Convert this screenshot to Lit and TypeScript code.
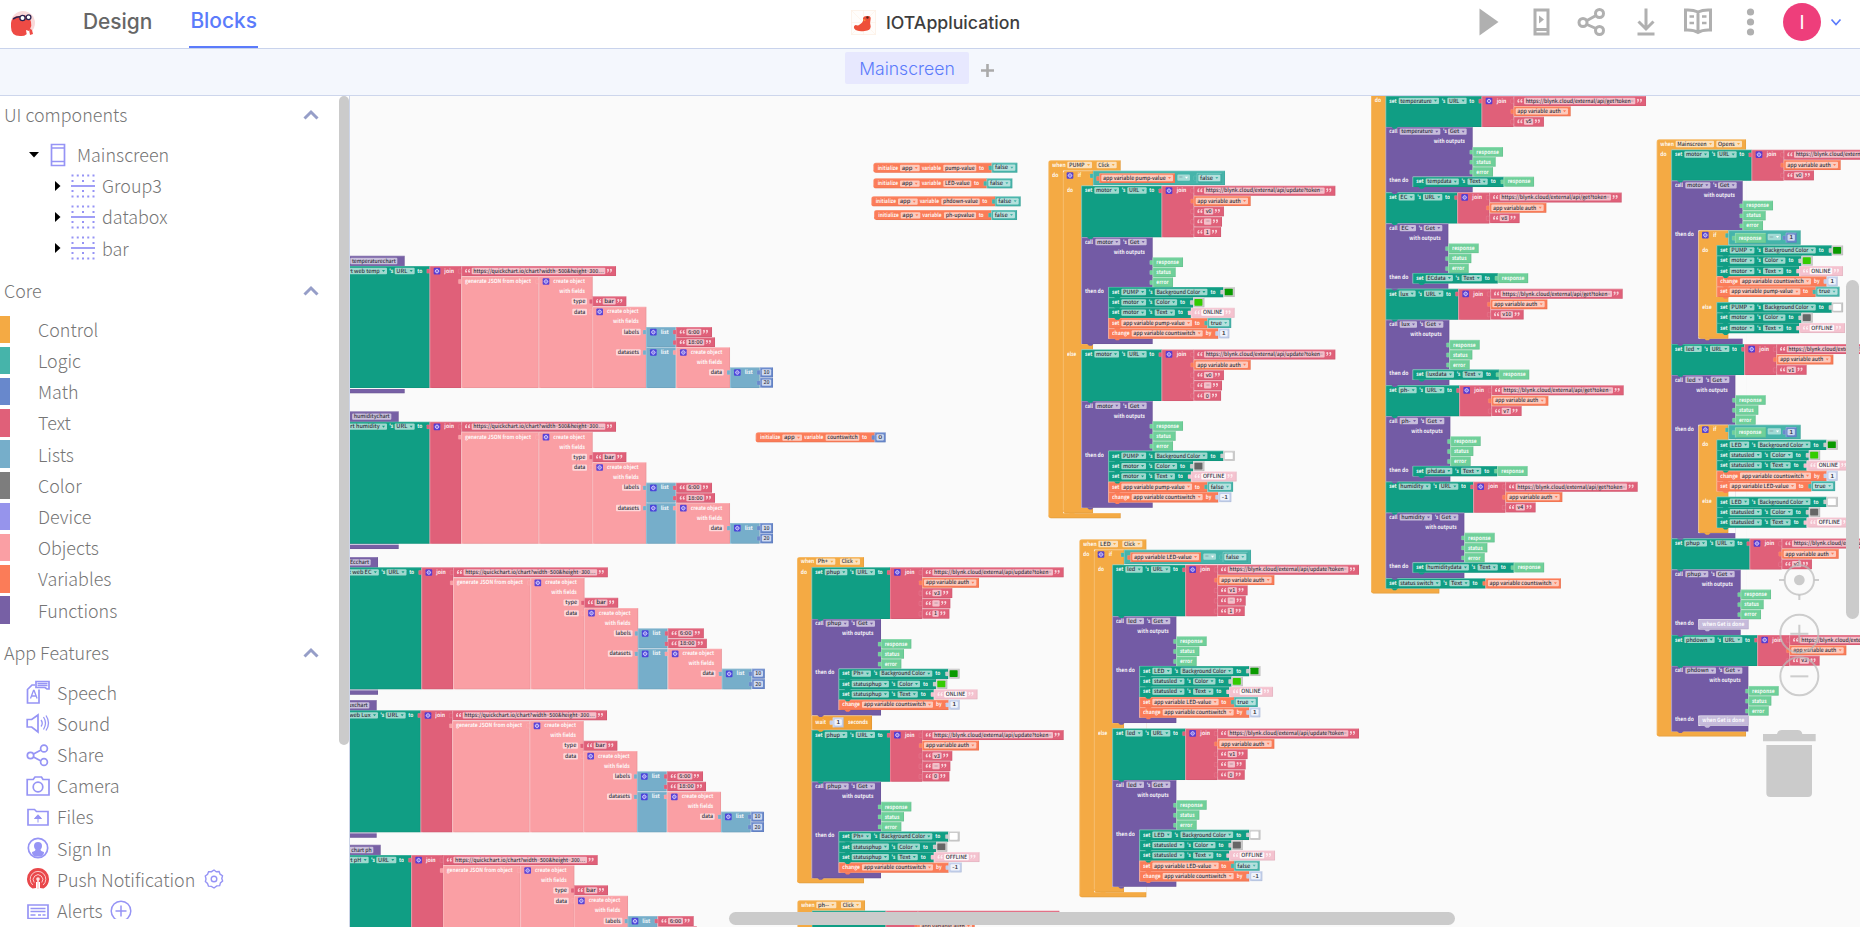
import { LitElement, html, svg, css } from "lit";
import { customElement } from "lit/decorators.js";

const C = {
  control: "#f4aa44", logic: "#46b4aa", math: "#6888cc", text: "#e06079", list: "#76aeca",
  color: "#7d7d7d", device: "#9694ec", object: "#fa9fa4", variable: "#fb7c58", fn: "#7760a5",
  set: "#109e84", call: "#735ba5", out: "#6fd09a", pale: "#f4c2cf", paleNum: "#c2cfec", swatch: "#cacaca",
};

/* Workspace blocks are drawn in thirds of a pixel. */
const EM = 17.6;
const charW = (c: string) =>
  "ijl.:',/|!".includes(c) ? 0.28 : c === "t" ? 0.33 : "fr".includes(c) ? 0.36 : c === "w" ? 0.76 : "mM".includes(c) ? 0.83 :
  c === " " ? 0.2 : c === "-" ? 0.32 : c === "s" ? 0.43 : c === "c" ? 0.46 : c === "L" || c === "F" ? 0.53 : /[A-Z]/.test(c) ? 0.6 :
  "aezv".includes(c) ? 0.49 : /[0-9]/.test(c) ? 0.52 : 0.55;
const est = (s: string) => s === "Background Color" ? 132 : [...s].reduce((n, c) => n + charW(c), 0) * EM;

const T = (x: number, cy: number, s: string, w = est(s), dark = false) => svg`<text
  x=${x} y=${cy + 5.5} textLength=${w} lengthAdjust="spacingAndGlyphs" class=${dark ? "d" : "l"}>${
  s.split(/(=)/).map((p) => (p === "=" ? svg`<tspan opacity=".25">=</tspan>` : p))}</text>`;

const F = (x: number, cy: number, s: string, w: number, arrow = "", op = 0.6) => svg`
  <rect x=${x} y=${cy - 9.5} width=${w} height="19" rx="3" fill="#fff" opacity=${op}></rect>
  ${T(x + 5, cy, s, arrow ? w - 27 : w - 10, true)}
  ${arrow ? svg`<path d="M${x + w - 15} ${cy - 3}h9l-4.5 6z" fill=${arrow}></path>` : ""}`;

const B = (x: number, y: number, r: number, b: number, color: string, tab = false, round = false) => svg`
  ${tab ? svg`<rect x=${x - 9} y=${y + 9} width="10" height="13" rx="2" fill=${color} stroke="#fff" stroke-opacity=".3"></rect>` : ""}
  <path d=${round ? `M${x + 8} ${y}H${r}V${b}H${x + 8}q-8 0-8-8V${y + 8}q0-8 8-8z` : `M${x} ${y}H${r}V${b}H${x}z`} fill=${color}></path>
  <path d=${`M${x + 1} ${b - (round ? 8 : 0)}V${y + 1}H${r - 1}`} fill="none" stroke="#fff" stroke-opacity=".35" stroke-width="2"></path>
  <path d=${`M${r - 1} ${y + 1}V${b - 1}H${x + 6}`} fill="none" stroke="#000" stroke-opacity=".09" stroke-width="2"></path>`;

const notch = (x: number, y: number, color: string) =>
  svg`<path d=${`M${x + 17} ${y - 1}h20l-6 6h-8z`} fill=${color}></path>`;

const gear = (x: number, cy: number) => svg`
  <rect x=${x} y=${cy - 9.5} width="20" height="20" rx="3" fill="#4637dc" opacity=".88"></rect>
  <circle cx=${x + 10} cy=${cy + 0.5} r="5" fill="none" stroke="#dcd8ff" stroke-width="2.6"></circle>
  <path d=${`M${x + 10} ${cy - 7}v15M${x + 2.5} ${cy + 0.5}h15`} stroke="#dcd8ff" stroke-width="1.6" opacity=".6"></path>`;

const quote = (x: number, cy: number, flip = false) => svg`<path transform=${`translate(${x} ${cy - 7})${flip ? " rotate(180 8 6)" : ""}`}
  d="M6 0C2 1 0 4 0 8q0 4 3 4t3.500-3q0-3-3-3.500Q4 3 6.500 2zM15 0c-4 1-6 4-6 8q0 4 3 4t3.500-3q0-3-3-3.500Q13 3 15.500 2z" fill="#fff" opacity=".72"></path>`;

const str = (x: number, y: number, s: string, h = 30, tw = est(s), color = C.text) => {
  const fw = s === "" ? 22 : tw + 10;
  return svg`${B(x, y, x + fw + 63, y + h, color, true)}${quote(x + 11, y + 15)}
    ${F(x + 31, y + 15, s || "=", fw, "", color === C.pale ? 0.85 : 0.6)}${quote(x + fw + 35, y + 15, true)}`;
};
const num = (x: number, y: number, s: string, color = C.paleNum) => {
  const fw = s === "1" || s === "0" ? 22 : 28;
  return svg`${B(x, y, x + fw + 11, y + 30, color, true)}${F(x + 5.5, y + 15, s, fw, "", color === C.math ? 0.68 : 0.75)}`;
};
const bool = (x: number, y: number, s: string) => {
  const w = est(s) + 30;
  return svg`${B(x, y, x + w + 11, y + 30, C.logic, true)}${F(x + 5, y + 15, s, w, C.logic)}`;
};
const swatch = (x: number, y: number, fill: string) => svg`${B(x, y, x + 34, y + 30, C.swatch, true)}
  <rect x=${x + 4} y=${y + 5} width="24" height="20" rx="2" fill=${fill}></rect>`;

type Part = { h: number; color: string; draw: (x: number, y: number) => unknown };
type Val = (x: number, y: number) => unknown;

const stack = (x: number, y: number, parts: Part[]) => {
  let at = y;
  return parts.map((p, i) => {
    const top = at;
    at += p.h;
    return [p.draw(x, top), i ? notch(x, top, parts[i - 1].color) : "", i === parts.length - 1 ? notch(x, at, p.color) : ""];
  });
};
const total = (parts: Part[]) => parts.reduce((n, p) => n + p.h, 0);

const url = (name: string, off: number, action: string, ...args: string[]): Part => {
  const h = 31 * (args.length + 2);
  return {
    h, color: C.set,
    draw: (x, y) => {
      const j = x + off, c = y + 14.5, s = j + 96;
      const link = `https://blynk.cloud/external/api/${action}?token=`;
      return svg`${B(x, y, j, y + h, C.set)}${T(x + 11, c, "set", 22)}${F(x + 39, c, name, off - 167, C.set)}
        ${T(j - 120, c, "'s", 11)}${F(j - 103, c, "URL", 58, C.set)}${T(j - 37, c, "to", 15)}
        ${B(j, y, s, y + h, C.text, true)}${gear(j + 12, c)}${T(j + 45, c, "join", 29)}
        ${str(s, y, link, 30, action === "get" ? 324 : 352)}
        ${B(s, y + 31, s + 171, y + 61, C.variable, true)}${F(s + 6, y + 46, "app variable auth", 157, C.variable)}
        ${args.map((a, i) => str(s, y + 62 + i * 31, a))}`;
    },
  };
};

const call = (name: string, off: number, inner: Part[]): Part => {
  const h = 149 + total(inner) + 16.3;
  return {
    h, color: C.call,
    draw: (x, y) => {
      const r = x + off - 27;
      return svg`${B(x, y, r, y + h, C.call)}${T(x + 11, y + 14, "call", 24)}${F(x + 42, y + 14, name, off - 166, C.call)}
        ${T(r - 89, y + 14, "'s", 11)}${F(r - 74, y + 14, "Get", 56, C.call)}${T(r - 117, y + 44, "with outputs", 94)}
        ${[["response", 91, 68], ["status", 69, 44], ["error", 61, 37]].map(([s, w, t], i) => svg`
          ${B(r, y + 60 + i * 30, r + Number(w), y + 89 + i * 30, C.out, true)}${T(r + 11, y + 75 + i * 30, String(s), Number(t))}`)}
        ${T(x + 11, y + 161, "then do", 57)}
        <rect x=${x + 81} y=${y + 149} width=${r - x - 80} height=${total(inner)} fill="#fafafa"></rect>
        ${stack(x + 81, y + 149, inner)}`;
    },
  };
};

const prop = (name: string, p: string, val: Val): Part => ({
  h: 31, color: C.set,
  draw: (x, y) => {
    const c = y + 15, w = est(name) + 28, px = x + 39 + w + 26, pw = est(p) + 26, e = px + pw + 48;
    return svg`${B(x, y, e, y + 31, C.set)}${T(x + 11, c, "set", 22)}${F(x + 39, c, name, w, C.set)}
      ${T(px - 18, c, "'s", 11)}${F(px, c, p, pw, C.set)}${T(px + pw + 9, c, "to", 15)}${val(e, y)}`;
  },
});
const setVar = (name: string, val: Val): Part => ({
  h: 31, color: C.variable,
  draw: (x, y) => {
    const c = y + 15, w = est(name) + 27, e = x + 39 + w + 46;
    return svg`${B(x, y, e, y + 31, C.variable)}${T(x + 11, c, "set", 22)}${F(x + 39, c, name, w, C.variable)}
      ${T(x + 39 + w + 8, c, "to", 15)}${val(e, y)}`;
  },
});
const change = (n: string): Part => ({
  h: 31, color: C.variable,
  draw: (x, y) => svg`${B(x, y, x + 330, y + 31, C.variable)}${T(x + 11, y + 15, "change", 53)}
    ${F(x + 70, y + 15, "app variable countswitch", 213, C.variable)}${T(x + 292, y + 15, "by", 17)}${num(x + 330, y, n)}`,
});
const wait: Part = {
  h: 44, color: "#f2a136",
  draw: (x, y) => svg`${B(x, y, x + 181, y + 43, "#f2a136")}${T(x + 11, y + 21, "wait", 32)}${num(x + 63, y + 6, "1")}${T(x + 109, y + 21, "seconds", 60)}`,
};
const filler: Part = {
  h: 31, color: "#c6bbdb",
  draw: (x, y) => svg`${B(x, y, x + 151, y + 30, "#c6bbdb", false, true)}${T(x + 12, y + 15, "when Get is done", 126)}`,
};
const iff = (condRight: number, cond: Val, a: Part[], b: Part[]): Part => {
  const ha = total(a), h = 45 + ha + 16 + total(b) + 16;
  return {
    h, color: C.control,
    draw: (x, y) => svg`${B(x, y, x + 90, y + h, C.control, false, true)}
      <rect x=${x + 55} y=${y + 45} width="36" height=${ha} fill="#fafafa"></rect>
      <rect x=${x + 55} y=${y + 61 + ha} width="36" height=${total(b)} fill="#fafafa"></rect>
      ${gear(x + 11, y + 14)}${T(x + 44, y + 14, "if", 10)}
      ${B(x + 90, y, x + condRight, y + 43, C.logic, true)}${cond(x + 90, y)}
      ${T(x + 12, y + 59, "do", 18)}${stack(x + 55, y + 45, a)}
      ${T(x + 12, y + 75 + ha, "else", 28)}${stack(x + 55, y + 61 + ha, b)}`,
  };
};
const varCond = (name: string, w: number): Val => (x, y) => svg`
  ${B(x + 19, y + 8, x + w, y + 37, C.variable, true)}${F(x + 25, y + 22, name, w - 31, C.variable)}
  ${F(x + w + 7, y + 21, "=", 38, "#fff", 0.5)}
  ${B(x + w + 65, y + 7, x + w + 141, y + 37, C.logic, true)}${F(x + w + 70, y + 22, "false", 66, C.logic)}`;
const respCond: Val = (x, y) => svg`
  ${B(x + 20, y + 8, x + 113, y + 38, C.out, true)}${T(x + 31, y + 23, "response", 68)}
  ${F(x + 118, y + 20, "=", 40, "#fff", 0.5)}${num(x + 172, y + 7, "1", C.math)}`;

const event = (x: number, y: number, r: number, name: string, ev: string, nw: number, ew: number, body: Part[]) => {
  const h = total(body);
  return svg`${B(x, y, r, y + 31 + h + 15, C.control, false, true)}
    <rect x=${x + 44} y=${y + 31} width=${r - x - 43} height=${h} fill="#fafafa"></rect>
    ${T(x + 11, y + 14, "when", 41)}${F(x + 57, y + 14, name, nw, C.control, 0.65)}
    ${F(r - 12 - ew, y + 14, ev, ew, C.control, 0.65)}${T(x + 11, y + 45, "do", 19)}
    ${stack(x + 44, y + 31, body)}`;
};

const sw = (c: string): Val => (x, y) => swatch(x, y, c);
const pale = (s: string): Val => (x, y) => str(x, y, s, 30, s === "ONLINE" ? 58 : 64, C.pale);
const bl = (s: string): Val => (x, y) => bool(x, y, s);
const resp: Val = (x, y) => svg`${B(x, y, x + 91, y + 30, C.out, true)}${T(x + 12, y + 15, "response", 68)}`;

const on = (a: string, b: string) => [prop(a, "Background Color", sw("#0a9a00")), prop(b, "Color", sw("#33cc00")), prop(b, "Text", pale("ONLINE"))];
const off = (a: string, b: string) => [prop(a, "Background Color", sw("#fff")), prop(b, "Color", sw("#666")), prop(b, "Text", pale("OFFLINE"))];

const toggle = (dev: string, o: number, btn: string, lbl: string, v: string, variable: string, cr: number, vw: number) =>
  iff(cr, varCond(variable, vw),
    [url(dev, o, "update", v, "", "1"), call(dev, o, [...on(btn, lbl), setVar(variable, bl("true")), change("1")])],
    [url(dev, o, "update", v, "", "0"), call(dev, o, [...off(btn, lbl), setVar(variable, bl("false")), change("-1")])]);

const sensor = (dev: string, o: number, v: string, target: string) =>
  [url(dev, o, "get", v), call(dev, o, [prop(target, "Text", resp)])];

const onOpen = (dev: string, o: number, v: string, btn: string, lbl: string, variable: string) => [
  url(dev, o, "get", v),
  call(dev, o, [iff(307, respCond, [...on(btn, lbl), change("1"), setVar(variable, bl("true"))], off(btn, lbl))]),
];

const initVar = (x: number, y: number, name: string, nw: number, val: Val) => {
  const e = x + 210 + nw;
  return svg`${B(x, y, e + 46, y + 30, C.variable, false, true)}${T(x + 13, y + 16, "initialize", 61)}${F(x + 80, y + 16, "app", 59, C.variable)}
    ${T(x + 145, y + 16, "variable", 58)}${F(x + 210, y + 16, name, nw)}${T(e + 8, y + 16, "to", 15)}${val(e + 46, y)}`;
};

const createObj = (x: number, y: number, b: number) => svg`${B(x, y, x + 162, b, C.object, true)}${gear(x + 12, y + 15)}
  ${T(x + 44, y + 15, "create object", 95)}${T(x + 62, y + 45, "with fields", 77)}`;
const listBlock = (x: number, y: number, b: number) => svg`${B(x, y, x + 89, b, C.list, true)}${gear(x + 12, y + 15)}${T(x + 44, y + 15, "list", 24)}`;

const chart = (x: number, y: number, r: number, title: string, target: string) => svg`<g transform=${`translate(${x} ${y})`}>
  ${B(-300, -31, r, 382, C.fn)}
  <rect x="-300" y="366" width="700" height="3" fill="#fafafa"></rect>
  ${F(r - 22 - est(title) - 10, -15, title, est(title) + 10)}
  ${B(-300, 0, 239, 366, C.set)}${F(111 - est(target) - 32, 15, target, est(target) + 32, C.set)}${T(118, 15, "'s", 12)}
  ${F(134, 15, "URL", 60, C.set)}${T(202, 15, "to", 15)}
  ${B(239, 0, 334, 366, C.text, true)}${gear(251, 15)}${T(283, 15, "join", 29)}
  ${str(334, 0, "https://quickchart.io/chart?width=500&height=300…", 30, 391)}
  ${B(334, 31, 566, 366, C.object, true)}${T(345, 46, "generate JSON from object", 198)}
  ${createObj(566, 31, 366)}${F(665, 106, "type", 46)}${F(667, 138, "data", 44)}
  ${str(727, 91, "bar", 30, 29)}
  ${createObj(727, 122, 366)}${F(816, 198, "labels", 56)}${F(798, 259, "datasets", 74)}
  ${listBlock(888, 183, 243)}${str(978, 183, "6:00", 30, 35)}${str(978, 214, "18:00", 29, 44)}
  ${listBlock(888, 244, 366)}${createObj(978, 244, 366)}${F(1077, 319, "data", 44)}
  ${listBlock(1140, 304, 366)}${num(1230, 304, "10", C.math)}${num(1230, 335, "20", C.math)}
</g>`;

const at = (x: number, y: number, body: unknown) => svg`<g transform=${`translate(${x} ${y}) scale(.33333)`}>${body}</g>`;

@customElement("block-canvas")
class BlockCanvas extends LitElement {
  static styles = css`
    :host { display: block; position: relative; overflow: hidden; background: #fafafa; }
    .ws { display: block; width: 1510px; height: 831px; }
    text { font-family: "Noto Sans CJK SC", "Noto Sans", sans-serif; font-weight: 700; font-size: 17px; text-rendering: geometricPrecision; }
    .l { fill: #fff; opacity: .93; }
    .d { fill: #33333e; font-weight: 500; }
    .v, .h { position: absolute; background: #cbcbcb; border-radius: 7px; }
    .v { right: 1px; top: 184px; width: 13px; height: 339px; }
    .h { left: 379px; bottom: 2px; width: 726px; height: 13px; }
  `;
  render() {
    return html`<svg class="ws" viewBox="350 96 1510 831">
      ${at(350, 240, [chart(0, 78, 164, "temperaturechart", "chart web temp"), chart(0, 545, 146, "humiditychart", "chart humidity")])}
      ${at(350, 545, [chart(-24.5, 67, 108.5, "Ecchart", "chart web EC"), chart(-27, 496, 107, "luxchart", "chart web Lux"), chart(-55, 930, 147, "chart ph", "chart pH")])}
      ${at(740, 150, [
        initVar(400, 38, "pump-value", 99, bl("false")),
        initVar(400, 85, "LED-value", 84, bl("false")),
        initVar(394, 139, "phdown-value", 115, bl("false")),
        initVar(402, 180, "ph-upvalue", 96, bl("false")),
        initVar(47, 847, "countswitch", 101, (x, y) => num(x, y, "0", C.math)),
      ])}
      ${at(1040, 150, event(25, 31, 242, "PUMP", "Click", 74, 60, [toggle("motor", 241, "PUMP", "motor", "v0", "app variable pump-value", 486, 246)]))}
      ${at(1070, 530, event(28, 28, 229, "LED", "Click", 59, 60, [toggle("led", 219, "LED", "statusled", "v1", "app variable LED-value", 471, 231)]))}
      ${at(780, 545, [
        event(51, 36, 252, "Ph+", "Click", 58, 60, [
          url("phup", 235, "update", "v3", "", "1"), call("phup", 235, [...on("Ph+", "statusphup"), change("1")]), wait,
          url("phup", 235, "update", "v3", "", "0"), call("phup", 235, [...off("Ph+", "statusphup"), change("-1")]),
        ]),
        event(52, 1066, 255, "ph--", "Click", 60, 60, [url("ph", 221, "update", "v2", "", "1")]),
      ])}
      ${at(1360, 90, event(33, -13, 238, "Clock", "Timer", 60, 60, [
        ...sensor("temperature", 288, "v5", "tempdata"), ...sensor("EC", 215, "v8", "ECdata"),
        ...sensor("lux", 218, "v10", "luxdata"), ...sensor("ph-", 221, "v7", "phdata"),
        ...sensor("humidity", 263, "v4", "humiditydata"),
        prop("status switch", "Text", (x, y) => svg`${B(x, y, x + 226, y + 31, C.variable, true)}${F(x + 7, y + 15, "app variable countswitch", 213, C.variable)}`),
      ]))}
      ${at(1640, 130, event(50, 28, 318, "Mainscreen", "Opens", 115, 77, [
        ...onOpen("motor", 241, "v0", "PUMP", "motor", "app variable pump-value"),
        ...onOpen("led", 219, "v1", "LED", "statusled", "app variable LED-value"),
        url("phup", 235, "get", "v2"), call("phup", 235, [filler]),
        url("phdown", 258, "get", "v3"), call("phdown", 258, [filler]),
      ]))}
      ${at(1640, 500, svg`<g fill="none" stroke="#bbb" stroke-opacity=".72" stroke-width="6">
        <circle cx="478" cy="240" r="44"></circle><path d="M417 240h16M523 240h14M478 284v16M478 180v16"></path>
        <circle cx="478" cy="401" r="57"></circle><path d="M451 401h54M478 374v54"></path>
        <circle cx="478" cy="529" r="57"></circle><path d="M451 529h54"></path></g>
        <circle cx="478" cy="240" r="16" fill="#cbcbcb"></circle>
        <path d="M369 702h42q2-12 14-12h48q12 0 14 12h40v22H369zM379 735h137v144q0 12-12 12H391q-12 0-12-12z" fill="#cbcbcb"></path>`)}
    </svg><div class="v"></div><div class="h"></div>`;
  }
}

const ico = (body: unknown) => html`<svg class="ico" width="24" height="24" viewBox="0 0 24 24" fill="none" stroke="#9694f5" stroke-width="1.7">${body}</svg>`;
const features: [string, unknown, unknown?][] = [
  ["Speech", svg`<path d="M9 5H6L1.500 9.500V23H13V9.500"></path><path d="M10 1.500h13v7.500h-2l-2-1.500h-9z"></path><path d="M11.500 3.500h10M11.500 5.500h10M4.500 18.500l3-8h.6l3 8M5.500 16h4.600" stroke-width="1.300"></path>`],
  ["Sound", svg`<path d="M1.200 8.500h4.500L12 4v17l-6.300-5H1.200z"></path><path d="M15 9q2.500 3.200 0 6.500M17.500 6q4 6 0 12.500M20 4.500q5 7.500 0 15" stroke-width="1.300"></path>`],
  ["Share", svg`<circle cx="4.500" cy="12.500" r="3.200"></circle><circle cx="18" cy="5.500" r="3.400"></circle><circle cx="18" cy="19" r="3.400"></circle><path d="M7.500 11l7.500-4M7.500 14l7.500 4"></path>`],
  ["Camera", svg`<path d="M1.200 5.500h6L9 3h6.500l1.500 2.500h6V21H1.200z"></path><circle cx="12" cy="13" r="4.800"></circle>`],
  ["Files", svg`<path d="M2 4.500h6.500l2 2H22V20H2z"></path><path d="M12 17.500v-6M8.500 13.500L12 9.800l3.500 3.700z" fill="#9694f5" stroke-width="1"></path>`],
  ["Sign In", svg`<circle cx="12" cy="12" r="9.700"></circle><path d="M12 6q4 0 4 4 0 2-1.500 3.500 0 1.500 3.500 2.500 0 3-3 4.500H9Q6 19 6 16q3.500-1 3.500-2.500Q8 12 8 10q0-4 4-4z" fill="#9694f5" stroke="none"></path>`],
  ["Push Notification", svg`<path d="M5 20.500a11 11 0 1 1 14 0l-1.500 1-3.500-.6V15h-4v6l-3.500.5z" fill="#e9484b" stroke="none"></path><g stroke="#ffd9d9" stroke-width=".9"><path d="M6.800 18a7.800 7.800 0 1 1 10.400 0M8.200 15.500a4.800 4.800 0 1 1 7.600 0"></path><path d="M12 12v10" stroke-width="1.800"></path></g><circle cx="12" cy="12" r="1.800" fill="#ffe3e3" stroke="none"></circle>`,
    html`<svg class="after" width="20" height="20" viewBox="0 0 20 20" fill="none" stroke="#9694f5" stroke-width="1.400"><path d="M10 1l2.300 1.700 2.800-.2 1 2.700 2.400 1.500-.7 2.800.8 2.600-2.200 1.800-.7 2.700-2.900.3L10 19l-2.600-1.600-2.900-.2-1-2.800L1.400 12.600 2 10l-.7-3 2.300-1.700 1-2.700 2.900.1z"></path><circle cx="10" cy="10" r="2.800"></circle></svg>`],
  ["Alerts", svg`<path d="M2 6h20v13.500H2z"></path><path d="M4.500 9.500h15M4.500 12.500h15M4.500 16h5M12 16h3M16.500 16h3" stroke-width="1.300"></path>`,
    html`<svg class="after" width="22" height="22" viewBox="0 0 22 22" fill="none" stroke="#9694f5" stroke-width="1.500"><circle cx="11" cy="11" r="9.800"></circle><path d="M11 5.500v11M5.500 11h11"></path></svg>`],
];
const core: [string, string][] = [
  ["Control", C.control], ["Logic", C.logic], ["Math", C.math], ["Text", C.text], ["Lists", C.list],
  ["Color", C.color], ["Device", C.device], ["Objects", C.object], ["Variables", C.variable], ["Functions", C.fn],
];

@customElement("side-panel")
class SidePanel extends LitElement {
  static styles = css`
    :host { display: flex; background: #fff; border-right: 1px solid #cdd5e8; box-sizing: border-box; overflow: hidden;
      font: 300 17.9px/31px "Noto Sans CJK SC", "Noto Sans", sans-serif; color: #757575; }
    .list { flex: 1; height: 823px; overflow: hidden; }
    .head { display: flex; justify-content: space-between; align-items: center; height: 36px; padding: 0 20px 0 4px; }
    .head:not(.first) { margin-top: 9px; }
    .tree { padding-top: 7px; }
    .row { display: flex; align-items: center; height: 31.2px; white-space: nowrap; }
    .swatch { width: 10px; height: 27.5px; margin-right: 28px; }
    .feat { padding-left: 26px; }
    .core { padding-top: 5px; }
    .features { padding-top: 6px; }
    .ico { margin-right: 7px; flex: none; }
    .after { margin-left: 9px; }
    .feat:last-child .after { margin-left: 7px; }
    .root { padding-left: 28px; }
    .root .ico { margin: 0 7px 0 6px; }
    .node { padding-left: 53px; }
    .node .ico { margin: 0 7px 0 10px; }
    .bar { width: 10px; height: 649px; border-radius: 5px; background: #cbcbcb; }
  `;
  head(s: string, cls = "") {
    return html`<div class="head ${cls}"><span>${s}</span><svg width="16" height="11" viewBox="0 0 16 11" fill="none" stroke="#969ec8" stroke-width="3"><path d="M1.500 9.500L8 3l6.500 6.500"></path></svg></div>`;
  }
  render() {
    return html`<div class="list">
      ${this.head("UI components", "first")}
      <div class="tree">
        <div class="row root"><svg width="12" height="7" viewBox="0 0 12 7"><path d="M1 1h10L6 6.500z"></path></svg>
          ${ico(svg`<path d="M5.500 1.500h13v21h-13zM5.500 5h13M5.500 18.500h13"></path>`)}<span>Mainscreen</span></div>
        ${["Group3", "databox", "bar"].map((s) => html`<div class="row node"><svg width="8" height="12" viewBox="0 0 8 12"><path d="M2 1v10l5.500-5z"></path></svg>
          ${ico(svg`<path d="M.5 1.500h23M.5 22.500h23" stroke-width="2" stroke-dasharray="2 3.250"></path><path d="M.5 7h23M.5 17h23" stroke-width="2" stroke-dasharray="2 8.500"></path><path d="M0 12h24" stroke-width="1.800"></path>`)}<span>${s}</span></div>`)}
      </div>
      ${this.head("Core")}
      <div class="core">${core.map(([s, c]) => html`<div class="row"><div class="swatch" style="background:${c}"></div><span>${s}</span></div>`)}</div>
      ${this.head("App Features")}
      <div class="features">${features.map(([s, i, a]) => html`<div class="row feat">${ico(i)}<span>${s}</span>${a ?? ""}</div>`)}</div>
    </div><div class="bar"></div>`;
  }
}

@customElement("app-root")
class AppRoot extends LitElement {
  static styles = css`
    :host { display: grid; grid-template-rows: 49px 47px 831px; width: 1860px; height: 927px; overflow: hidden; background: #fff;
      font-family: Inter, "Liberation Sans", sans-serif; }
    header { display: grid; grid-template-columns: 851px 1fr auto; align-items: center; border-bottom: 1px solid #c9d3ec; box-sizing: border-box; }
    .nav { display: flex; align-items: center; height: 48px; padding-left: 10px; }
    .link { font-weight: 550; font-size: 20.9px; color: #666; margin-left: 48px; height: 48px; line-height: 44px; box-sizing: border-box; }
    .link.on { color: #5b7bfb; border-bottom: 2px solid #5b7bfb; margin-left: 37px; line-height: 42px; padding: 0 1px; }
    .title { display: flex; align-items: center; gap: 10px; font-weight: 550; font-size: 17.7px; color: #3e3e3e; height: 44px; margin-bottom: 4px; }
    .tools { display: flex; align-items: center; height: 44px; margin-bottom: 4px; padding-right: 18px; }
    .avatar { width: 38px; height: 38px; border-radius: 50%; background: #ee3e7b; color: #fff; display: grid; place-items: center; font-size: 19px; margin: 0 9px 0 23px; }
    .tabs { display: flex; align-items: flex-start; padding: 3px 0 0 845px; background: #f4f7fd; border-bottom: 1px solid #cdd6ec; box-sizing: border-box; }
    .tab { width: 124px; height: 32px; line-height: 34px; border-radius: 2px; background: #e7e8fe; color: #5b7bfb; text-align: center; font-size: 17.6px; font-weight: 300; }
    .plus { margin: 12px 0 0 12px; }
    main { display: grid; grid-template-columns: 350px 1510px; }
  `;
  render() {
    return html`<header>
      <div class="nav">
        <svg width="25" height="26" viewBox="0 0 25 26"><circle cx="13" cy="12" r="12" fill="#f9d9d9"></circle>
          <path d="M1 12Q2 5 9 5q10-3 12 6 1 4-1 7-3 8-10 7-9 0-9-9z" fill="#ee4b45"></path>
          <path d="M3 8q5-3 8-2" stroke="#2b2450" stroke-width="1.500" fill="none"></path>
          <circle cx="12.500" cy="7" r="2.600" fill="#fff" stroke="#2b2450" stroke-width="1.300"></circle><circle cx="18.500" cy="6.300" r="2.400" fill="#fff" stroke="#2b2450" stroke-width="1.300"></circle>
          <path d="M16 19l3 1 1 5h-3z" fill="#fff"></path><path d="M19 17l3 2 1 4-3 1z" fill="#ee4b45"></path></svg>
        <span class="link">Design</span><span class="link on">Blocks</span>
      </div>
      <div class="title"><svg width="25" height="25" viewBox="0 0 25 25"><rect x=".5" y=".5" width="24" height="24" fill="#fffdfb" stroke="#fdf3ea"></rect><path d="M0 0l25 25M25 0L0 25M12.500 0v25M0 12.500h25" stroke="#fdf0e4" stroke-width=".6"></path>
        <path d="M12 8q1-2.500 4.500-2 4-.5 3 4-1 3.500.2 6.500 0 4-6 4.500-8 1-10.500-2.500-1-3 1.500-3.500 2.500 1 4-.5 3-2 3.300-3.500z" fill="#ee4f38"></path><circle cx="16.500" cy="7.500" r="1.200" fill="#5a2418"></circle><path d="M12 9l3 1-2 1.300z" fill="#f9a03c"></path></svg><span>IOTAppluication</span></div>
      <div class="tools">
        <svg width="290" height="30" viewBox="1470 7 290 30" fill="none" stroke="#b0b0b0" stroke-width="3">
          <path d="M1479.500 8.500v27l19-13.500z" fill="#b0b0b0" stroke="none"></path>
          <path d="M1535 10h13v24h-13zM1535 29.500h13"></path><path d="M1539 15.500v8l5-4z" fill="#b0b0b0" stroke="none"></path>
          <circle cx="1583" cy="22.500" r="4"></circle><circle cx="1599.500" cy="13.500" r="4"></circle><circle cx="1599.500" cy="30.500" r="4"></circle><path d="M1587 20.500l9-5M1587 24.500l9 4"></path>
          <path d="M1646 8.500v20M1638.500 21.500l7.500 7.500 7.500-7.500M1637.500 34h17"></path>
          <path d="M1698 12q-5-2.500-12.500-2v20q8-.5 12.500 2.500 4.500-3 12.500-2.500V10q-7.500-.5-12.500 2v20"></path><path d="M1689.500 16.500h4.500M1689.500 23h4.500M1702 16.500h4.500M1702 23h4.500" stroke-width="2.600"></path>
          <g fill="#b0b0b0" stroke="none"><circle cx="1750.500" cy="12" r="3.600"></circle><circle cx="1750.500" cy="22" r="3.600"></circle><circle cx="1750.500" cy="32" r="3.600"></circle></g></svg>
        <div class="avatar">I</div>
        <svg width="12" height="8" viewBox="0 0 12 8" fill="none" stroke="#5b7bfb" stroke-width="1.700"><path d="M1.500 1.500L6 6.500l4.500-5"></path></svg>
      </div>
    </header>
    <div class="tabs"><div class="tab">Mainscreen</div><svg class="plus" width="13" height="13" viewBox="0 0 13 13" stroke="#aaa" stroke-width="2.600"><path d="M6.500 0v13M0 6.500h13"></path></svg></div>
    <main><side-panel></side-panel><block-canvas></block-canvas></main>`;
  }
}
